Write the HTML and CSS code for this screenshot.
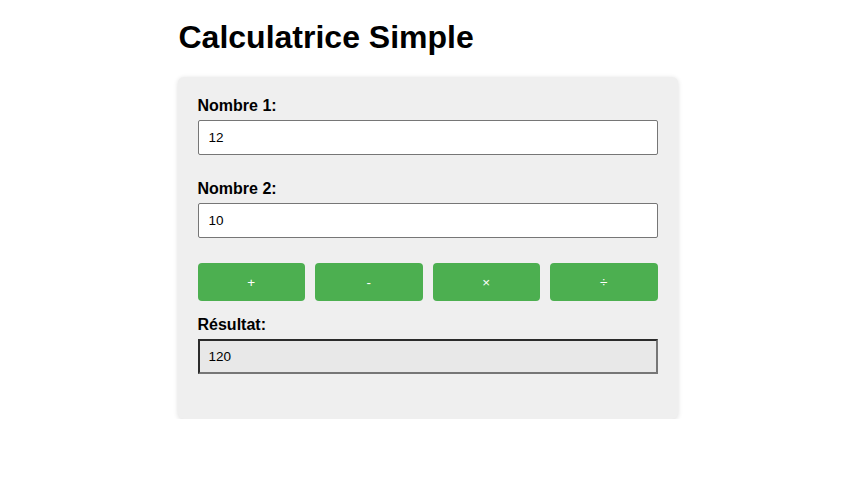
FILE: index.html
```html
<!DOCTYPE html>
<html lang="fr">
<head>
<meta charset="utf-8">
<title>Calculatrice Simple</title>
<link rel="stylesheet" href="styles.css">
</head>
<body>
<div class="container">
  <h1 class="title">Calculatrice Simple</h1>
  <div class="card">
    <div class="group">
      <label class="label" for="n1">Nombre 1:</label>
      <input class="field" id="n1" type="text" value="12">
    </div>
    <div class="group">
      <label class="label" for="n2">Nombre 2:</label>
      <input class="field" id="n2" type="text" value="10">
    </div>
    <div class="buttons">
      <button class="btn">+</button>
      <button class="btn">-</button>
      <button class="btn">×</button>
      <button class="btn">÷</button>
    </div>
    <div class="group result-group">
      <div class="label">Résultat:</div>
      <div class="result">120</div>
    </div>
  </div>
</div>
</body>
</html>
```
FILE: styles.css
```css
html, body {
  margin: 0;
  padding: 0;
  background: #ffffff;
  font-family: "Liberation Sans", Arial, sans-serif;
  color: #000;
}

.container {
  width: 500px;
  margin: 0 auto;
  padding-top: 19px;
}

.title {
  margin: 0 0 21px 1px;
  font-size: 32px;
  line-height: 37px;
  font-weight: bold;
}

.card {
  background: #efefef;
  border-radius: 6px;
  box-shadow: 0 1px 5px rgba(0, 0, 0, 0.14);
  padding: 20px;
}

.group {
  display: flex;
  flex-direction: column;
  margin-bottom: 25px;
}

.label {
  display: block;
  font-size: 16px;
  line-height: 18px;
  font-weight: bold;
  margin-bottom: 5px;
}

.field {
  box-sizing: border-box;
  width: 100%;
  height: 35px;
  margin: 0;
  padding: 0 10px;
  border: 1px solid #767676;
  border-radius: 2px;
  background: #ffffff;
  font-family: "Liberation Sans", Arial, sans-serif;
  font-size: 13.5px;
  color: #000;
  outline: none;
}

.buttons {
  display: flex;
  gap: 10px;
  margin-bottom: 15px;
}

.btn {
  flex: 1;
  height: 38px;
  margin: 0;
  padding: 0;
  border: none;
  border-radius: 4px;
  background: #4caf50;
  color: #ffffff;
  font-family: "Liberation Sans", Arial, sans-serif;
  font-size: 13.5px;
}

.result-group {
  margin-bottom: 25px;
}

.result {
  box-sizing: border-box;
  height: 35px;
  display: flex;
  align-items: center;
  padding: 0 9px;
  border-width: 2px;
  border-style: solid;
  border-color: #2b2b2b #767676 #767676 #2b2b2b;
  background: #e8e8e8;
  font-size: 13.5px;
}
```
